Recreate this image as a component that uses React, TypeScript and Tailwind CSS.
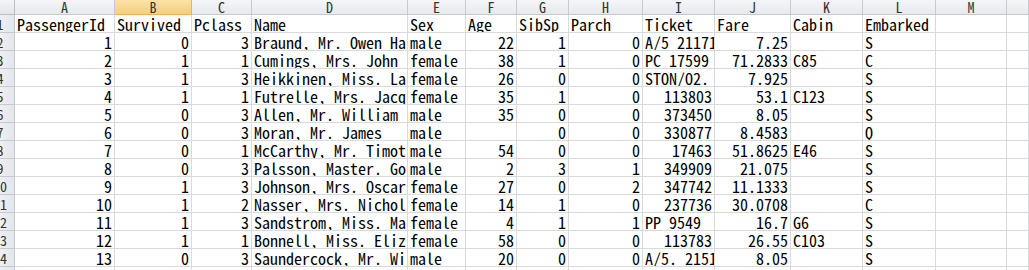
import React from "react";

const letters = ["A", "B", "C", "D", "E", "F", "G", "H", "I", "J", "K", "L", "M", "N"];

type Cell = string | number | null;

const header: Cell[] = ["PassengerId", "Survived", "Pclass", "Name", "Sex", "Age", "SibSp", "Parch", "Ticket", "Fare", "Cabin", "Embarked", null, null];

const data: Cell[][] = [
  [1, 0, 3, "Braund, Mr. Owen Ha", "male", 22, 1, 0, "A/5 21171", 7.25, null, "S", null, null],
  [2, 1, 1, "Cumings, Mrs. John", "female", 38, 1, 0, "PC 17599", 71.2833, "C85", "C", null, null],
  [3, 1, 3, "Heikkinen, Miss. La", "female", 26, 0, 0, "STON/O2.", 7.925, null, "S", null, null],
  [4, 1, 1, "Futrelle, Mrs. Jacq", "female", 35, 1, 0, 113803, 53.1, "C123", "S", null, null],
  [5, 0, 3, "Allen, Mr. William", "male", 35, 0, 0, 373450, 8.05, null, "S", null, null],
  [6, 0, 3, "Moran, Mr. James", "male", null, 0, 0, 330877, 8.4583, null, "Q", null, null],
  [7, 0, 1, "McCarthy, Mr. Timot", "male", 54, 0, 0, 17463, 51.8625, "E46", "S", null, null],
  [8, 0, 3, "Palsson, Master. Go", "male", 2, 3, 1, 349909, 21.075, null, "S", null, null],
  [9, 1, 3, "Johnson, Mrs. Oscar", "female", 27, 0, 2, 347742, 11.1333, null, "S", null, null],
  [10, 1, 2, "Nasser, Mrs. Nichol", "female", 14, 1, 0, 237736, 30.0708, null, "C", null, null],
  [11, 1, 3, "Sandstrom, Miss. Ma", "female", 4, 1, 1, "PP 9549", 16.7, "G6", "S", null, null],
  [12, 1, 1, "Bonnell, Miss. Eliz", "female", 58, 0, 0, 113783, 26.55, "C103", "S", null, null],
  [13, 0, 3, "Saundercock, Mr. Wi", "male", 20, 0, 0, "A/5. 2151", 8.05, null, "S", null, null],
  [null, null, null, null, null, null, null, null, null, null, null, null, null, null],
];

const font = { fontFamily: '"Noto Sans Mono CJK SC", "Liberation Mono", monospace' };

function RowLabel({ n }: { n: number }) {
  return (
    <div className="h-[18px] w-[15px] overflow-hidden border-b border-r border-[#c5cad1] bg-gradient-to-r from-[#eef0f3] to-[#e3e6ea]">
      <div className="ml-[-15px] flex h-full w-[30px] items-center justify-center text-[14px] leading-[14px] text-[#333]">
        {n}
      </div>
    </div>
  );
}

function DataCell({ v }: { v: Cell }) {
  const isNum = typeof v === "number";
  return (
    <div
      className={`flex h-[18px] items-end overflow-hidden whitespace-nowrap border-b border-r border-[#d9dadb] bg-white text-[16px] leading-[16px] text-black ${
        isNum ? "justify-end pr-[2px]" : "justify-start pl-[2px]"
      }`}
    >
      <span>{v === null ? "" : String(v)}</span>
    </div>
  );
}

export default function App() {
  return (
    <div className="h-[270px] w-[1029px] overflow-hidden bg-white" style={font}>
      <div className="grid grid-cols-[15px_100px_77px_60px_156px_58px_51px_52px_74px_72px_76px_72px_73px_71px_1fr]">
        {/* header row */}
        <div className="h-[15px] border-b border-r border-[#b9bec5] bg-gradient-to-b from-[#f3f5f7] to-[#e2e5ea]" />
        {letters.map((l) => (
          <div
            key={l}
            className={
              l === "B"
                ? "h-[15px] overflow-hidden border-b border-r border-[#f2b34d] bg-gradient-to-b from-[#fbe3a8] to-[#f7cd79] text-[14px] leading-[14px] text-[#333]"
                : "h-[15px] overflow-hidden border-b border-r border-[#c5cad1] bg-gradient-to-b from-[#f5f6f8] to-[#e6e9ed] text-[14px] leading-[14px] text-[#333]"
            }
          >
            <div className={l === "N" ? "flex h-full w-[72px] items-center justify-center" : "flex h-full w-full items-center justify-center"}>
              {l}
            </div>
          </div>
        ))}
        <RowLabel n={1} />
        {header.map((h, i) => (
          <DataCell key={"h" + i} v={h} />
        ))}
        {data.map((row, r) => (
          <React.Fragment key={r}>
            <RowLabel n={r + 2} />
            {row.map((v, c) => (
              <DataCell key={c} v={v} />
            ))}
          </React.Fragment>
        ))}
      </div>
    </div>
  );
}
